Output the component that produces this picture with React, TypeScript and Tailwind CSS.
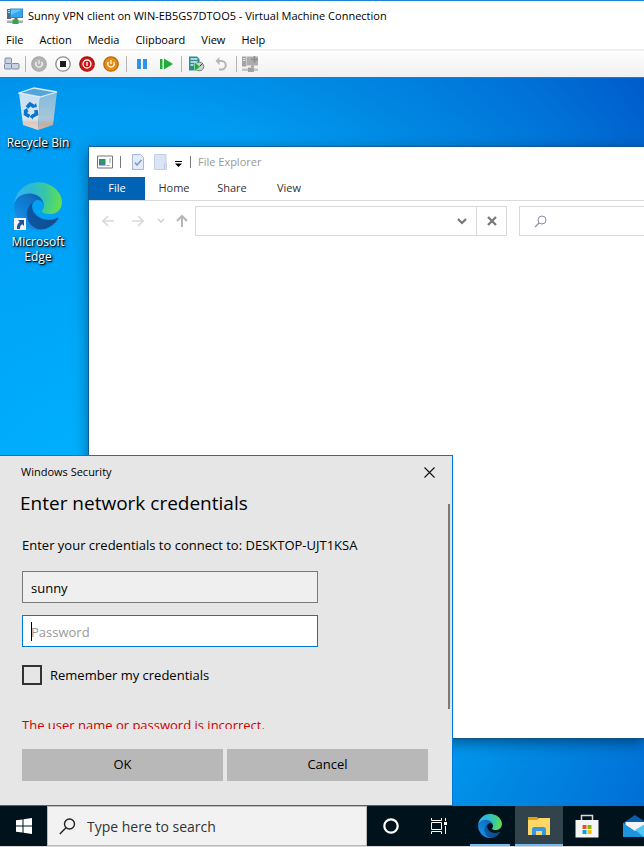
import React, { useState } from "react";

function EdgeLogo({ id, className }: { id: string; className: string }) {
  return (
    <svg viewBox="4 4 257 257" className={className} aria-hidden="true">
      <defs>
        <linearGradient id={`${id}-a`} x1="63" y1="185" x2="241" y2="185" gradientUnits="userSpaceOnUse">
          <stop offset="0" stopColor="#0c59a4" />
          <stop offset="1" stopColor="#114a8b" />
        </linearGradient>
        <linearGradient id={`${id}-b`} x1="155" y1="90" x2="45" y2="210" gradientUnits="userSpaceOnUse">
          <stop offset="0" stopColor="#0f5fae" />
          <stop offset="0.3" stopColor="#1272c4" />
          <stop offset="0.67" stopColor="#0c80d8" />
          <stop offset="1" stopColor="#1a8be0" />
        </linearGradient>
        <radialGradient id={`${id}-c`} cx="35" cy="70" r="230" gradientUnits="userSpaceOnUse">
          <stop offset="0" stopColor="#35b4ec" />
          <stop offset="0.3" stopColor="#2cb9d6" />
          <stop offset="0.6" stopColor="#36c7a4" />
          <stop offset="1" stopColor="#66e04c" />
        </radialGradient>
      </defs>
      <path
        fill={`url(#${id}-a)`}
        d="M235.68 195.53a93.73 93.73 0 0 1-10.54 4.71 101.87 101.87 0 0 1-35.9 6.46c-47.32 0-88.54-32.55-88.54-74.32A31.48 31.48 0 0 1 117.13 105.29c-42.8 1.8-53.8 46.4-53.8 72.53 0 73.88 68.09 81.37 82.76 81.37 7.91 0 19.84-2.3 27-4.56l1.31-.44a128.34 128.34 0 0 0 66.6-52.8 4 4 0 0 0-5.32-5.86z"
      />
      <path
        fill={`url(#${id}-b)`}
        d="M110.34 246.34A79.2 79.2 0 0 1 87.6 225a80.72 80.72 0 0 1 29.53-120c3.12-1.47 8.45-4.13 15.54-4a32.35 32.35 0 0 1 25.69 13 31.88 31.88 0 0 1 6.36 18.66c0-.21 24.46-79.6-80-79.6-43.9 0-80 41.66-80 78.21a130.15 130.15 0 0 0 12.11 56 128 128 0 0 0 156.38 67.11 75.55 75.55 0 0 1-62.78-8z"
      />
      <path
        fill={`url(#${id}-c)`}
        d="M156.94 153.78c-.81 1.05-3.3 2.5-3.3 5.66 0 2.61 1.7 5.12 4.72 7.23 14.38 10 41.49 8.68 41.56 8.68a59.56 59.56 0 0 0 30.27-8.35 61.38 61.38 0 0 0 30.43-52.88c.26-22.41-8-37.31-11.34-43.91C228.09 28.76 182.35 4.92 132.61 4.92a128 128 0 0 0-128 126.2c.48-36.54 36.8-66.05 80-66.05 3.5 0 23.46.34 42 10.07 16.34 8.58 24.9 18.94 30.85 29.21 6.18 10.67 7.28 24.15 7.28 29.52s-2.74 13.33-7.8 19.91z"
      />
    </svg>
  );
}

function RecycleBin() {
  return (
    <svg viewBox="0 0 40 44" className="h-11 w-10" aria-hidden="true">
      <defs>
        <linearGradient id="bin-left" x1="0" y1="0" x2="0" y2="1">
          <stop offset="0" stopColor="#c3e0f3" />
          <stop offset="0.7" stopColor="#d9e6ee" />
          <stop offset="0.8" stopColor="#d9c9c2" />
          <stop offset="1" stopColor="#e6d6ce" />
        </linearGradient>
        <linearGradient id="bin-right" x1="0" y1="0" x2="0" y2="1">
          <stop offset="0" stopColor="#7fbbe0" />
          <stop offset="0.7" stopColor="#a9c6d8" />
          <stop offset="0.85" stopColor="#c3aea6" />
          <stop offset="1" stopColor="#cdbab2" />
        </linearGradient>
      </defs>
      <path d="M1 6 22 10 20 43 5 38Z" fill="url(#bin-left)" />
      <path d="M22 10 39 5 35 38 20 43Z" fill="url(#bin-right)" />
      <path d="M1 6 16 1 39 5 22 10Z" fill="#55a5d8" stroke="#dcecf5" strokeWidth="1.3" />
      <g fill="none" stroke="#0f74cc" strokeWidth="3.6">
        <path d="M9 20.500 12 17l4 2.500" />
        <path d="M18 23l0.500 4-4.500 2.500" />
        <path d="M11.500 29.500 7.500 27l0.500-4" />
      </g>
      <path d="M14 21l5-1-1-4ZM15 27v5.500l-3.500-3ZM5 24l4-3 1.500 4Z" fill="#0f74cc" />
    </svg>
  );
}

function PowerButton({ label, rim, fill, children }: { label: string; rim: string; fill: string; children: React.ReactNode }) {
  return (
    <button aria-label={label} className="h-4 w-4">
      <svg viewBox="0 0 16 16" className="h-4 w-4">
        <circle cx="8" cy="8" r="7.200" fill={fill} stroke={rim} strokeWidth="1.300" />
        {children}
      </svg>
    </button>
  );
}

function Divider() {
  return <span className="h-4 w-px bg-[#b4b4b4]" />;
}

function HostWindowBar() {
  return (
    <header className="border-t border-[#1883d7] bg-white">
      <div className="flex h-[30px] items-center gap-[5px] px-[7px]">
        <svg viewBox="0 0 16 16" className="h-4 w-4" aria-hidden="true">
          <path d="M0 1h4v10H0Z" fill="#5f6a70" />
          <path d="M1 2.500h2M1 4.500h2" stroke="#b9dbe9" />
          <path d="M3 .5h13v9.500H3Z" fill="#2b88c9" />
          <path d="M4 1.500h11v7.500H4Z" fill="#35a6ec" />
          <path d="M4 1.500h11L4 7Z" fill="#68c3f6" />
          <path d="M7.500 10h3v2h-3Z" fill="#666" />
          <path d="M0 12.500h16v2.500H0Z" fill="#a6aeb0" />
          <path d="M5.500 11.500h6v4.500h-6Z" fill="#35a44c" />
        </svg>
        <h1 className="text-[11px] text-black">Sunny VPN client on WIN-EB5GS7DTOO5 - Virtual Machine Connection</h1>
      </div>
      <nav className="flex h-[18px] items-center gap-4 px-[6px] text-[11px] text-black">
        <button>File</button>
        <button>Action</button>
        <button>Media</button>
        <button>Clipboard</button>
        <button>View</button>
        <button>Help</button>
      </nav>
      <div className="flex h-7 items-center gap-[7px] border-t-2 border-[#f0f0f0] bg-linear-to-b from-[#fdfdfd] to-[#f0f0f0] px-1">
        <div className="flex items-center gap-[5px]">
          <button aria-label="Ctrl+Alt+Delete">
            <svg viewBox="0 0 16 16" className="h-4 w-4">
              <g fill="#c8d2e2" stroke="#7b8ba6">
                <rect x="1" y="2" width="6.500" height="5.500" rx="1" />
                <rect x=".5" y="7.500" width="7" height="5.500" rx="1" />
                <rect x="7.500" y="7.500" width="7.500" height="5.500" rx="1" />
              </g>
            </svg>
          </button>
          <Divider />
          <div className="flex items-center gap-2">
            <PowerButton label="Start" rim="#a8a8a8" fill="#b4b4b4">
              <path d="M8 4v4M5.500 5.800a3.200 3.200 0 1 0 5 0" stroke="#f4f4f4" fill="none" strokeWidth="1.200" />
            </PowerButton>
            <PowerButton label="Turn off" rim="#8b8b8b" fill="#fff">
              <rect x="5" y="5" width="6" height="6" fill="#1d1d1d" />
            </PowerButton>
            <PowerButton label="Shut down" rim="#a80f0f" fill="#d31414">
              <circle cx="8" cy="8" r="4" fill="none" stroke="#fff" strokeWidth="1.300" />
              <path d="M8 6v4" stroke="#fff" strokeWidth="1.300" />
            </PowerButton>
            <PowerButton label="Save" rim="#b36a09" fill="#ea8b0e">
              <path d="M8 4v4M5.500 5.800a3.200 3.200 0 1 0 5 0" stroke="#fff" fill="none" strokeWidth="1.200" />
            </PowerButton>
          </div>
        </div>
        <Divider />
        <div className="flex items-center gap-2">
          <button aria-label="Pause">
            <svg viewBox="0 0 16 16" className="h-4 w-4">
              <path d="M3 3h4v10H3ZM9 3h4v10H9Z" fill="#2f93e6" />
            </svg>
          </button>
          <button aria-label="Reset">
            <svg viewBox="0 0 16 16" className="h-4 w-4">
              <path d="M2 3h2.500v10H2ZM6 2.500 15 8 6 13.500Z" fill="#20b038" />
            </svg>
          </button>
        </div>
        <Divider />
        <div className="flex items-center gap-2">
          <button aria-label="Checkpoint">
            <svg viewBox="0 0 16 16" className="h-4 w-4">
              <path d="M0 .5h8l2.500 2.500v11.500H0Z" fill="#2e8b95" />
              <path d="M1.500 3h7M1.500 6h7M1.500 9h3" stroke="#d5eff2" strokeWidth="1.300" />
              <circle cx="10.500" cy="10.500" r="4.300" fill="#cfcfcf" stroke="#77807b" />
              <path d="m10.500 10.500 3-3" stroke="#333" />
              <path d="M5.500 6v9.500l6-4.700Z" fill="#20b038" stroke="#e9f7ea" strokeWidth=".5" />
            </svg>
          </button>
          <button aria-label="Revert">
            <svg viewBox="0 0 16 16" className="h-4 w-4">
              <path d="M4 5h4.500a4 4 0 0 1 0 8.500H6" fill="none" stroke="#b5b5b5" strokeWidth="2" />
              <path d="M6.500 1 2.500 5l4 4Z" fill="#b5b5b5" />
            </svg>
          </button>
        </div>
        <Divider />
        <button aria-label="Enhanced session" className="-ml-[2px]">
          <svg viewBox="0 0 16 16" className="h-4 w-4">
            <path d="M0 .5h4.500v10H0Z" fill="#a3a3a3" />
            <path d="M1 2.500h2.500M1 4.500h2.500" stroke="#e2e2e2" />
            <path d="M5 .5h11v9H5Z" fill="#adadad" />
            <path d="M12.500 0v7M9 3.500h7" stroke="#8d8d8d" strokeWidth="1.500" />
            <path d="M9 9.500h3v2H9Z" fill="#a0a0a0" />
            <path d="M0 12.500h16V15H0Z" fill="#c4c4c4" />
            <path d="M6 11.500h6V16H6Z" fill="#a3a3a3" />
          </svg>
        </button>
      </div>
    </header>
  );
}

function DesktopIcons() {
  return (
    <div className="absolute top-[9px] left-0 flex w-[76px] flex-col gap-8 text-center text-xs leading-[15px] text-white">
      <button className="flex flex-col items-center gap-1">
        <RecycleBin />
        <span className="whitespace-nowrap [text-shadow:1px_1px_1px_black,1px_1px_3px_black]">Recycle Bin</span>
      </button>
      <button className="flex flex-col items-center gap-1">
        <span className="relative">
          <EdgeLogo id="edge-desktop" className="h-12 w-12" />
          <svg viewBox="0 0 12 12" className="absolute bottom-0 left-0 h-3 w-3" aria-hidden="true">
            <path d="M0 0h12v12H0Z" fill="#f4f4f4" />
            <path d="M4 2h6v6L8.300 6.300C6.500 7.300 6 8.500 6 11H3C2.600 7.800 3.700 5.500 5.800 3.900Z" fill="#1f5697" />
          </svg>
        </span>
        <span className="[text-shadow:1px_1px_1px_black,1px_1px_3px_black]">Microsoft Edge</span>
      </button>
    </div>
  );
}

function ExplorerWindow() {
  return (
    <section className="absolute top-[69px] right-0 bottom-[68px] left-[89px] bg-white text-[11px] shadow-[0_0_0_1px_rgba(20,80,130,0.7),0_4px_14px_rgba(0,0,0,0.45)]">
      <div className="flex h-[30px] items-center px-2 text-[#999]">
        <svg viewBox="0 0 16 14" className="h-[14px] w-4" aria-hidden="true">
          <path d="M.5 1h15v12H.5Z" fill="#fff" stroke="#777" />
          <path d="M2 4h6.500v6.500H2Z" fill="#3c7bb0" />
          <path d="M3.500 5H8v4H3.500Z" fill="#2f9a60" />
          <path d="M13 3v5M9.500 10.500h3" stroke="#8aa" />
        </svg>
        <span className="ml-[7px] h-3 w-px bg-[#777]" />
        <svg viewBox="0 0 12 16" className="ml-[11px] h-4 w-3" aria-hidden="true">
          <path d="M.5.5h8l3 3v12H.5Z" fill="#e3ebf7" stroke="#a9b8d2" />
          <path d="m3 8.500 2 2.500 4.500-5" fill="none" stroke="#8298c2" strokeWidth="1.500" />
        </svg>
        <svg viewBox="0 0 13 16" className="ml-[10px] h-4 w-[13px]" aria-hidden="true">
          <path d="M.5.5H12v9h.5v6H.5Z" fill="#dbe4f3" stroke="#c3cfe3" />
          <path d="M10.500 9.500v6" stroke="#b9c7de" />
        </svg>
        <svg viewBox="0 0 7 6" className="mt-1 ml-2 h-[6px] w-[7px]" aria-hidden="true">
          <path d="M0 0h7v1H0ZM0 2.500h7L3.500 6Z" fill="#000" />
        </svg>
        <span className="mr-[7px] ml-2 h-3 w-px bg-[#777]" />
        <h2>File Explorer</h2>
      </div>
      <div className="flex h-6 border-b border-[#dadbdc] text-[#333]">
        <button className="w-14 bg-[#0063b5] text-white">File</button>
        <button className="w-[58px]">Home</button>
        <button className="w-[58px]">Share</button>
        <button className="w-14">View</button>
      </div>
      <div className="flex h-10 items-center">
        <div className="flex w-[106px] shrink-0 items-center pl-3">
          <button aria-label="Back">
            <svg viewBox="0 0 14 12" className="h-3 w-[14px]">
              <path d="M13 6H2M7 1 2 6l5 5" fill="none" stroke="#d9d9d9" strokeWidth="1.700" />
            </svg>
          </button>
          <button aria-label="Forward" className="ml-4">
            <svg viewBox="0 0 14 12" className="h-3 w-[14px]">
              <path d="M1 6h11M7 1l5 5-5 5" fill="none" stroke="#d9d9d9" strokeWidth="1.700" />
            </svg>
          </button>
          <button aria-label="Recent locations" className="ml-3">
            <svg viewBox="0 0 8 6" className="h-[6px] w-2">
              <path d="m1 1 3 3 3-3" fill="none" stroke="#d0d0d0" strokeWidth="1.500" />
            </svg>
          </button>
          <button aria-label="Up" className="ml-[10px]">
            <svg viewBox="0 0 14 14" className="h-[14px] w-[14px]">
              <path d="M7 13V2M2 7l5-5 5 5" fill="none" stroke="#b5b5b5" strokeWidth="2" />
            </svg>
          </button>
        </div>
        <div className="flex h-[30px] w-[312px] shrink-0 border border-[#d9d9d9]">
          <input aria-label="Address" className="min-w-0 flex-1 px-2 outline-none" />
          <button aria-label="Previous locations" className="flex w-7 items-center justify-center">
            <svg viewBox="0 0 10 7" className="h-[7px] w-[10px]">
              <path d="m1 1 4 4 4-4" fill="none" stroke="#777" strokeWidth="2.200" />
            </svg>
          </button>
          <button aria-label="Stop" className="flex w-[30px] items-center justify-center border-l border-[#d9d9d9]">
            <svg viewBox="0 0 10 10" className="h-[10px] w-[10px]">
              <path d="m1 1 8 8M9 1 1 9" stroke="#777" strokeWidth="2.200" />
            </svg>
          </button>
        </div>
        <div className="ml-3 flex h-[30px] min-w-0 flex-1 items-center border border-r-0 border-[#d9d9d9] pl-[14px]">
          <svg viewBox="0 0 13 13" className="h-[13px] w-[13px] shrink-0" aria-hidden="true">
            <circle cx="8" cy="5" r="4" fill="none" stroke="#8b8bab" />
            <path d="M5 8 1 12" stroke="#8b8bab" strokeWidth="1.200" />
          </svg>
          <input aria-label="Search" className="min-w-0 flex-1 px-2 outline-none" />
        </div>
      </div>
    </section>
  );
}

function CredentialsDialog() {
  const [user, setUser] = useState("sunny");
  const [password, setPassword] = useState("");
  const [remember, setRemember] = useState(false);
  return (
    <form
      role="dialog"
      aria-label="Windows Security"
      onSubmit={(e) => e.preventDefault()}
      className="absolute bottom-0 left-0 w-[453px] border border-l-0 border-[#0078d7] bg-[#e6e6e6] pb-6 text-black"
    >
      <div className="flex h-8 items-center justify-between pr-4 pl-[21px]">
        <span className="text-[11px]">Windows Security</span>
        <button type="button" aria-label="Close" className="p-px">
          <svg viewBox="0 0 11 11" className="h-[11px] w-[11px]">
            <path d="m.5.5 10 10M10.500.5l-10 10" stroke="#111" strokeWidth="1.100" />
          </svg>
        </button>
      </div>
      <h2 className="pl-5 text-[19px] leading-[30px]">Enter network credentials</h2>
      {/* the message runs past the bottom of the scroll area */}
      <div className="h-[211px] overflow-hidden pl-[22px] text-[13px] leading-5">
        <p className="pt-[17px]">Enter your credentials to connect to: DESKTOP-UJT1KSA</p>
        <input
          type="text"
          aria-label="User name"
          value={user}
          onChange={(e) => setUser(e.target.value)}
          className="mt-4 block h-8 w-[296px] border border-[#7a7a7a] bg-[#efefef] px-2 pt-px outline-none"
        />
        <div className="relative mt-3 w-[296px]">
          <input
            type="password"
            aria-label="Password"
            placeholder="Password"
            value={password}
            onChange={(e) => setPassword(e.target.value)}
            className="block h-8 w-full border border-[#0078d7] bg-white px-2 pt-px outline-none placeholder:text-[#999]"
          />
          <span className="absolute top-[7px] left-[9px] h-[19px] w-px bg-black" />
        </div>
        <label className="mt-[18px] flex items-center gap-2">
          <input
            type="checkbox"
            checked={remember}
            onChange={(e) => setRemember(e.target.checked)}
            className="h-5 w-5 appearance-none border-2 border-[#333] checked:bg-[#0078d7]"
          />
          Remember my credentials
        </label>
        <p className="mt-[30px] text-[#cc0000]">The user name or password is incorrect.</p>
      </div>
      <span className="absolute top-12 right-[2px] h-[205px] w-[2px] bg-[#7a7a7a]" />
      <div className="mt-5 grid grid-cols-2 gap-1 pr-6 pl-[22px] text-[13px]">
        <button type="submit" className="h-8 bg-[#b8b8b8]">OK</button>
        <button type="button" className="h-8 bg-[#b8b8b8]">Cancel</button>
      </div>
    </form>
  );
}

function Taskbar() {
  return (
    <footer className="flex h-[41px] overflow-hidden border-b border-[#d6d6d6] bg-[#00131d]">
      <button aria-label="Start" className="flex w-[47px] shrink-0 items-center justify-center">
        <svg viewBox="0 0 16 16" className="h-4 w-4">
          <path d="M0 2.300 6.500 1.400v6.100H0ZM7.500 1.200 16 0v7.500H7.500ZM0 8.500h6.500v6.100L0 13.700ZM7.500 8.500H16V16l-8.500-1.200Z" fill="#fff" />
        </svg>
      </button>
      <label className="flex w-80 shrink-0 items-center gap-[11px] border border-[#b9bcbd] bg-[#f2f2f2] pl-[11px]">
        <svg viewBox="0 0 17 17" className="h-[17px] w-[17px] shrink-0" aria-hidden="true">
          <circle cx="10.500" cy="6" r="5" fill="none" stroke="#222" strokeWidth="1.400" />
          <path d="M7 9.800.8 16" stroke="#222" strokeWidth="1.400" />
        </svg>
        <input
          type="text"
          aria-label="Search"
          placeholder="Type here to search"
          className="min-w-0 flex-1 text-[14px] outline-none placeholder:text-[#333]"
        />
      </label>
      <button aria-label="Cortana" className="flex w-12 shrink-0 items-center justify-center">
        <svg viewBox="0 0 16 16" className="h-4 w-4">
          <circle cx="8" cy="8" r="6.700" fill="none" stroke="#fff" strokeWidth="2.200" />
        </svg>
      </button>
      <button aria-label="Task View" className="flex w-12 shrink-0 items-center justify-center">
        <svg viewBox="0 0 16 16" className="h-4 w-4" fill="none" stroke="#fff">
          <path d="M.5 0v2.500h10V0M.5 4.500h10v7H.5ZM.5 16v-2.500h10V16M14.500 0v3M14.500 8v8" />
          <path d="M13 4h3v3h-3Z" fill="#fff" stroke="none" />
        </svg>
      </button>
      <button aria-label="Microsoft Edge" className="ml-[7px] flex w-10 shrink-0 items-center justify-center border-b-2 border-[#76b9ed] pt-[2px]">
        <EdgeLogo id="edge-task" className="h-6 w-6" />
      </button>
      <button aria-label="File Explorer" className="ml-[5px] flex w-12 shrink-0 items-center justify-center border-b-2 border-[#76b9ed] bg-[#33434c] pt-[2px]">
        <svg viewBox="0 0 22 18" className="h-[18px] w-[22px]">
          <path d="M0 0h9l2 2-2 2H0Z" fill="#e0a10d" />
          <path d="M0 3h9l2-2h11v17H0Z" fill="#ffd766" />
          <path d="M4 18v-6.500L5.500 10h11l1.500 1.500V18h-4v-4H8v4Z" fill="#3a96dd" />
        </svg>
      </button>
      <button aria-label="Microsoft Store" className="flex w-12 shrink-0 items-center justify-center">
        <svg viewBox="0 0 24 24" className="h-6 w-6">
          <path d="M6.500 7V1.500h11V7" fill="none" stroke="#d8d8d8" strokeWidth="1.500" />
          <path d="M.5 6h23v17.500H.5Z" fill="#f5f5f5" />
          <path d="M7.500 11h4v4h-4Z" fill="#f04e1f" />
          <path d="M12.500 11h4v4h-4Z" fill="#7fba00" />
          <path d="M7.500 16h4v4h-4Z" fill="#00a4ef" />
          <path d="M12.500 16h4v4h-4Z" fill="#ffb900" />
        </svg>
      </button>
      <button aria-label="Mail" className="flex w-12 shrink-0 items-center justify-center">
        <svg viewBox="0 0 24 22" className="h-[22px] w-6">
          <path d="M0 8 12 0l12 8v3H0Z" fill="#0b5cad" />
          <path d="M2.500 7h19v11h-19Z" fill="#f4f4f4" />
          <path d="M0 8l12 8L24 8v14H0Z" fill="#1d94df" />
          <path d="M24 8v14h-3l-9-7Z" fill="#4cc9f5" />
        </svg>
      </button>
    </footer>
  );
}

export default function App() {
  return (
    <div className="flex min-h-screen flex-col overflow-hidden font-['Open_Sans','Noto_Sans',sans-serif]">
      <HostWindowBar />
      <main className="relative flex-1 overflow-hidden border-t border-[#0086e6] bg-[radial-gradient(circle_at_100px_60%,#00b2ff_0px,#009cf3_400px,#008ae4_480px,#0072d8_600px,#0058c8_710px)]">
        <DesktopIcons />
        <ExplorerWindow />
        <CredentialsDialog />
      </main>
      <Taskbar />
    </div>
  );
}
